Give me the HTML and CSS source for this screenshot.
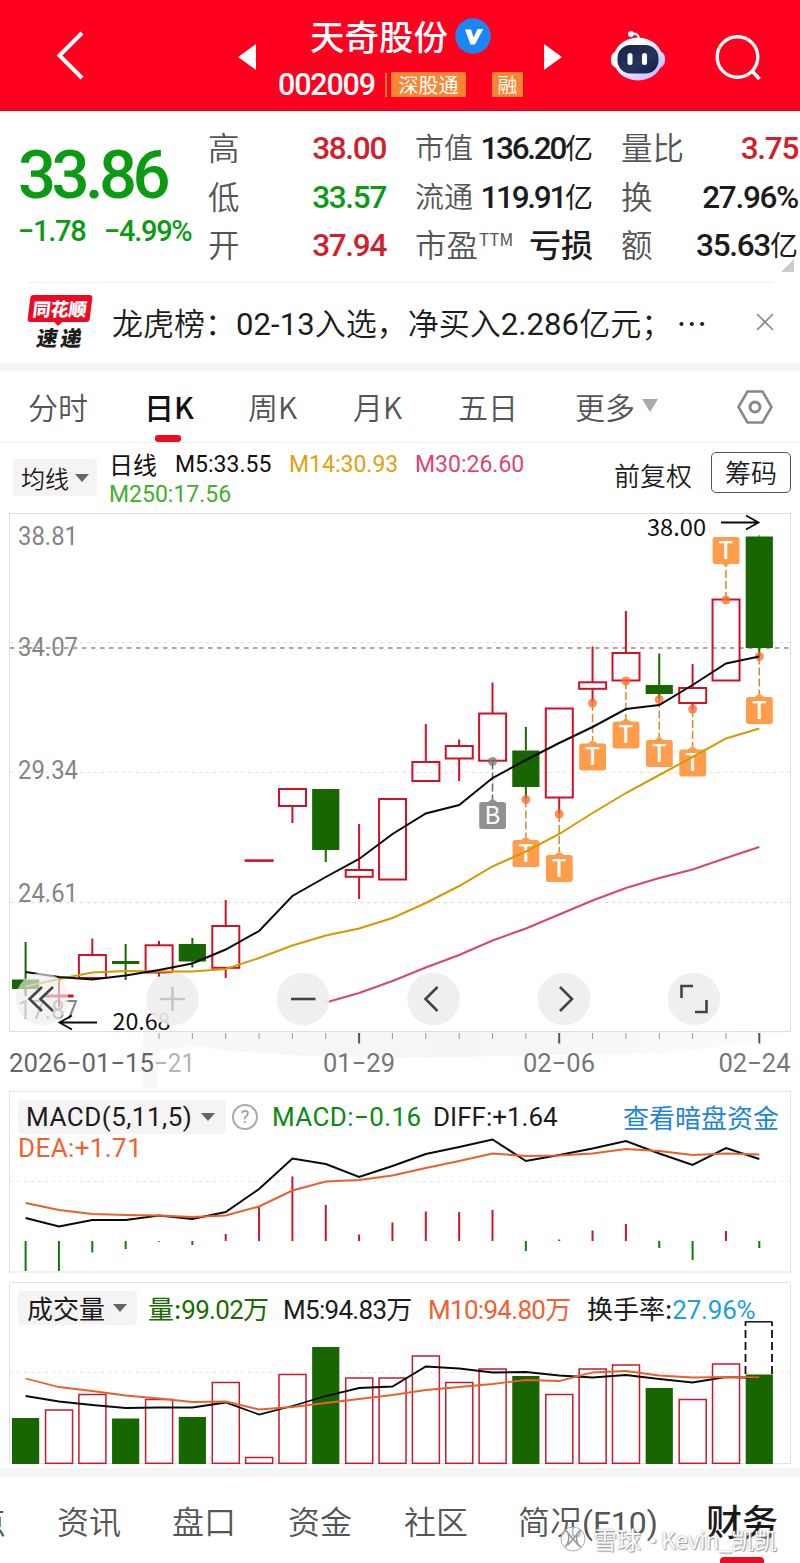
FILE: index.html
```html
<!DOCTYPE html>
<html lang="zh-CN">
<head>
<meta charset="utf-8">
<title>天奇股份 002009</title>
<link rel="stylesheet" href="styles.css">
</head>
<body>
<div class="app">
  <header class="topbar">
    <svg class="back" viewBox="0 0 28 50" width="28" height="50"><path d="M26 2 3.500 24.500 26 47" fill="none" stroke="#fff" stroke-width="4"/></svg>
    <svg class="prev" viewBox="0 0 18 28" width="18" height="28"><path d="M18 1v26L0 14z" fill="#fff"/></svg>
    <div class="heading">
      <div class="name">天奇股份<svg class="verified" viewBox="0 0 36 36" width="36" height="36"><circle cx="18" cy="18" r="17.700" fill="#1b87f5"/><path d="M10 11.500h6l2.600 8 4-8.500h5.600l-8.200 15.500h-4.600z" fill="#fff"/></svg></div>
      <div class="code"><span class="digits">002009</span><i class="bar"></i><span class="tag">深股通</span><span class="tag tag-margin">融</span></div>
    </div>
    <svg class="next" viewBox="0 0 18 28" width="18" height="28"><path d="M0 1v26l18-13z" fill="#fff"/></svg>
    <svg class="robot" viewBox="0 0 56 52" width="56" height="52">
      <defs>
        <linearGradient id="shell" x1="0" y1="0" x2="1" y2="1"><stop offset=".3" stop-color="#fff"/><stop offset="1" stop-color="#b9b4ff"/></linearGradient>
        <linearGradient id="visor" x1="0" y1="0" x2="1" y2="1"><stop offset="0" stop-color="#142048"/><stop offset=".6" stop-color="#26355a"/><stop offset="1" stop-color="#101b4a"/></linearGradient>
      </defs>
      <path d="M21 5c4-1 7 0 8 4" fill="none" stroke="#fff" stroke-width="2"/><circle cx="21" cy="5" r="3" fill="#fff"/>
      <rect x="1" y="22" width="54" height="17" rx="7" fill="url(#shell)"/>
      <ellipse cx="28" cy="30" rx="24.500" ry="21.500" fill="url(#shell)"/>
      <rect x="7.500" y="16" width="41" height="28.500" rx="13" fill="url(#visor)"/>
      <rect x="17.500" y="24" width="5" height="12" rx="2.500" fill="#fff"/><rect x="32" y="24" width="5" height="12" rx="2.500" fill="#fff"/>
    </svg>
    <svg class="search" viewBox="0 0 46 46" width="46" height="46"><circle cx="22.500" cy="22" r="20.300" fill="none" stroke="#fff" stroke-width="3.400"/><path d="m36 35 8.500 9" stroke="#fff" stroke-width="3.600"/></svg>
  </header>

  <section class="quote">
    <div class="last">
      <div class="price">33.86</div>
      <div class="change"><span>−1.78</span><span>−4.99%</span></div>
    </div>
    <dl class="stats">
      <dt>高</dt><dd class="up">38.00</dd><dt class="tight">市值</dt><dd>136.20<b>亿</b></dd><dt>量比</dt><dd class="up">3.75</dd>
      <dt>低</dt><dd class="down">33.57</dd><dt class="tight">流通</dt><dd>119.91<b>亿</b></dd><dt>换</dt><dd>27.96%</dd>
      <dt>开</dt><dd class="up">37.94</dd><dt>市盈<sup>TTM</sup></dt><dd class="words">亏损</dd><dt>额</dt><dd>35.63<b>亿</b></dd>
    </dl>
    <i class="corner"></i>
  </section>

  <section class="news">
    <div class="brand"><div class="brand-top">同花顺</div><div class="brand-sub">速递</div></div>
    <p class="headline"><span>龙虎榜：</span><span class="lat">02-13</span>入选，<span>净买入</span><span class="lat">2.286</span>亿元；<span class="dots">⋯</span></p>
    <svg class="close" viewBox="0 0 18 18" width="18" height="18"><path d="m1 1 16 16M17 1 1 17" stroke="#888" stroke-width="1.600"/></svg>
  </section>

  <nav class="periods">
    <span>分时</span><span class="on">日K</span><span>周K</span><span>月K</span><span>五日</span><span>更多<i class="caret"></i></span>
    <svg viewBox="0 0 36 34" width="36" height="34"><path d="M10.500 1.500h15L34.500 17l-9 15.500h-15L1.500 17z" fill="none" stroke="#888" stroke-width="2.500" stroke-linejoin="round"/><circle cx="18" cy="17" r="5" fill="none" stroke="#888" stroke-width="3"/></svg>
  </nav>

  <section class="averages">
    <div class="picker">均线<i class="caret dark"></i></div>
    <div class="ma-list">
      <span class="cn">日线</span><span>M5:33.55</span><span class="gold">M14:30.93</span><span class="pink">M30:26.60</span>
      <span class="lime">M250:17.56</span>
    </div>
    <div class="adjust">前复权</div>
    <div class="chips">筹码</div>
  </section>

  <svg id="kline" class="chart" viewBox="0 510 800 580" width="800" height="580"></svg>

  <section class="panel macd">
    <svg id="macd" class="chart" viewBox="0 1090 800 186" width="800" height="186"></svg>
    <div class="legend">
      <div class="picker"><span class="lat">MACD(5,11,5)</span><i class="caret dark"></i></div>
      <i class="help">?</i>
      <span class="lat green">MACD:−0.16</span><span class="lat diff">DIFF:+1.64</span><a class="link">查看暗盘资金</a>
      <span class="lat dea">DEA:+1.71</span>
    </div>
  </section>

  <section class="panel volume">
    <svg id="volume" class="chart" viewBox="0 1276 800 192" width="800" height="192"></svg>
    <div class="legend">
      <div class="picker">成交量<i class="caret dark"></i></div>
      <span class="vgreen">量:<span class="num">99.02</span>万</span><span><span class="num">M5:94.83</span>万</span><span class="orange"><span class="num">M10:94.80</span>万</span><span>换手率:<span class="num blue">27.96%</span></span>
    </div>
  </section>

  <footer class="tabs">
    <span class="cut">点</span><span>资讯</span><span>盘口</span><span>资金</span><span>社区</span><span>简况<span class="lat">(F10)</span></span><span class="on">财务</span>
    <div class="watermark"><svg viewBox="0 0 26 26" width="26" height="26"><circle cx="13" cy="13" r="12" fill="#fff" fill-opacity=".65" stroke="#999" stroke-opacity=".8"/><path d="M5 4c5 2 5 12 0 17M21 4c-6 3-6 14 0 17M8 7l10 12M18 7 8 19" fill="none" stroke="#999" stroke-width="1.600"/></svg><span>雪球</span><span class="dot">·</span><span class="user">Kevin_凯凯</span></div>
  </footer>
</div>
<script src="chart.js"></script>
</body>
</html>
```

FILE: styles.css
```css
* { box-sizing: border-box; }
body { margin: 0; background: #fff; color: #1c1c1c; font-family: Roboto, "Noto Sans CJK SC", sans-serif; }
i, b { font-style: normal; font-weight: inherit; }
.app { width: 800px; height: 1563px; overflow: hidden; display: flex; flex-direction: column; }
.app > * { flex: none; }
svg { display: block; }
.lat, .num { font-family: Roboto, sans-serif; }

.topbar { height: 111px; background: #ff001e; color: #fff; display: grid; grid-template-columns: 56px 182px 40px 266px 67px 104px 1fr; border-bottom: 1px solid #e00020; }
.back { grid-column: 2; margin-top: 31px; }
.prev { grid-column: 3; margin-top: 43px; }
.heading { grid-column: 4; }
.next { grid-column: 5; margin-top: 43px; }
.robot { grid-column: 6; margin-top: 29px; margin-left: -1px; }
.search { grid-column: 7; margin-top: 35px; }
.name { display: flex; margin-left: 32px; padding-top: 15px; height: 66px; font: 500 34.500px/40px "Noto Sans CJK SC"; }
.verified { margin: 3px 0 0 7px; }
.code { display: flex; align-items: flex-start; }
.digits { width: 107px; font-weight: 500; font-size: 30.500px; line-height: 38px; letter-spacing: -1.200px; }
.bar { width: 2px; height: 24px; margin-top: 7px; margin-right: 4px; background: #fb7a2c; }
.tag { height: 25px; width: 75px; margin-top: 6px; background: #f98431; border-radius: 1px; font: 20px/25px "Noto Sans CJK SC"; text-align: center; }
.tag-margin { width: 31px; margin-left: 26px; }

.quote { height: 171px; display: grid; grid-template-columns: 208px 592px; position: relative; }
.price { padding-left: 18px; padding-top: 26px; font-size: 67px; font-weight: 500; line-height: 76px; letter-spacing: -4.600px; color: #0b9b12; }
.change { display: grid; grid-template-columns: 86px 100px; padding-left: 18px; font-size: 29px; font-weight: 500; line-height: 37px; letter-spacing: -1.300px; color: #0b9b12; }
.stats { margin: 13px 0 0; display: grid; grid-template-columns: 50px 128px 29px 90px 88px 28px 60px 118px; grid-template-rows: repeat(3, 48.500px); font-size: 31.500px; line-height: 48px; }
.stats dt { font-family: "Noto Sans CJK SC"; font-weight: 350; line-height: 44px; color: #555; white-space: nowrap; }
.stats dd { margin: 0; padding-top: 1px; font-weight: 500; letter-spacing: -1.300px; text-align: right; white-space: nowrap; }
.stats dt:nth-of-type(3n+1) { grid-column: 1; }
.stats dd:nth-of-type(3n+1) { grid-column: 2; }
.stats dt:nth-of-type(3n+2) { grid-column: 4; }
.stats dd:nth-of-type(3n+2) { grid-column: 5; justify-self: end; letter-spacing: -2.300px; }
.stats dt:nth-of-type(3n) { grid-column: 7; }
.stats dd:nth-of-type(3n) { grid-column: 8; margin-right: 1px; }
.stats .tight { font-size: 29px; line-height: 45px; }
.stats b { font-family: "Noto Sans CJK SC"; font-size: 28px; line-height: 0; font-weight: 400; letter-spacing: 0; }
.stats dd.words:nth-of-type(3n+2) { padding: 0; font: 500 32px/44px "Noto Sans CJK SC"; letter-spacing: 0; }
.stats sup { font: 17px/17px "Noto Sans CJK SC"; line-height: 0; vertical-align: 11px; margin-left: 1px; }
.up { color: #d1202c; }
.down { color: #0b9b12; }
.corner { position: absolute; right: 6px; bottom: 10px; border-left: 13px solid transparent; border-bottom: 13px solid #ccc; }

.news { height: 89px; display: grid; grid-template-columns: 84px 643px 1fr; padding-left: 28px; border-bottom: 8px solid #f5f5f5; background: linear-gradient(#eee, #eee) 28px 0 / 745px 1px no-repeat; }
.brand { width: 66px; padding-top: 13px; font-family: "Noto Sans CJK SC"; font-weight: 900; text-align: center; }
.brand-top { height: 27px; width: 62px; margin-left: 1px; transform: skewX(-7deg); border-radius: 3px; background: #ee0a22; color: #fff; font-size: 18px; line-height: 26px; }
.brand-top::after { content: ""; display: block; width: 0; margin: 0 auto; border: 5px solid transparent; border-top-color: #ee0a22; border-bottom: 0; }
.brand-sub { font-size: 21px; line-height: 29px; transform: skewX(-10deg); letter-spacing: 3px; margin-top: 1px; }
.headline { margin: 0; padding-top: 18px; font: 350 31px/44px "Noto Sans CJK SC"; white-space: nowrap; }
.headline .lat { font: 400 31px/44px Roboto; letter-spacing: .1px; }
.headline .dots { font-size: 31px; margin-left: 4px; }
.close { margin: 31px 0 0 1px; }

.periods { height: 72px; padding-left: 28px; display: grid; grid-template-columns: 116px 104px 105px 105px 117px 162px 1fr; font: 350 30px/72px "Noto Sans CJK SC"; color: #555; border-bottom: 1px solid #eee; }
.periods span { display: flex; align-items: center; height: 69px; }
.periods .on { position: relative; color: #111; font-weight: 500; }
.periods .on::after { content: ""; position: absolute; left: 11px; top: 64px; width: 26px; height: 7px; border-radius: 3px; background: #ed0a22; }
.periods svg { margin-top: 19px; }
.caret { display: inline-block; border: 8px solid transparent; border-top: 13px solid #aaa; border-bottom: 0; margin-left: 7px; }
.caret.dark { border-width: 8px 7px 0; border-top-color: #666; margin-left: 8px; }

.averages { height: 67px; display: grid; grid-template-columns: 13px 84px 12px 505px 97px 80px; font: 350 26px/30px "Noto Sans CJK SC"; }
.picker { display: flex; align-items: center; background: #f6f3f4; border-radius: 4px; }
.averages .picker { grid-column: 2; height: 37px; margin-top: 16px; padding-left: 8px; font-size: 24px; }
.averages .picker .caret { margin-left: 6px; }
.ma-list { grid-column: 4; display: grid; grid-template-columns: 66px 114px 126px 1fr; grid-template-rows: 30px 30px; margin-top: 7px; font: 400 23px/30px Roboto; color: #111; }
.ma-list .cn { font: 400 24px/28px "Noto Sans CJK SC"; }
.ma-list .gold { color: #e2a10c; }
.ma-list .pink { color: #e0446e; }
.ma-list .lime { color: #41b02c; grid-column: 1 / 4; }
.adjust { grid-column: 5; padding-top: 17px; }
.chips { height: 41px; margin-top: 9px; border: 1.500px solid #555; border-radius: 5px; text-align: center; line-height: 38px; }

.chart { font-family: Roboto, sans-serif; }
.chart .cjk { font-family: "Noto Sans CJK SC", sans-serif; }
.panel { display: grid; }
.panel > * { grid-area: 1 / 1; }
.macd .legend { display: grid; grid-template-columns: 208px 6px 40px 161px 191px 160px; grid-template-rows: 34px 26px; align-content: start; padding: 10px 0 0 18px; font-size: 26px; line-height: 35px; white-space: nowrap; }
.macd .picker { padding-left: 8px; }
.macd .picker .lat { width: 167px; letter-spacing: .500px; }
.help { grid-column: 3; width: 26px; height: 26px; margin-top: 4px; border: 2px solid #aaa; border-radius: 50%; color: #999; font: 18px/22px Roboto; text-align: center; }
.green { color: #078c10; letter-spacing: .400px; }
.link { font: 26px/33px "Noto Sans CJK SC"; margin-left: -1px; color: #1f85d8; }
.dea { grid-column: 1; color: #ee6230; line-height: 29px; letter-spacing: .400px; }

.volume .legend { display: grid; grid-template-columns: 130px 135px 145px 159px 1fr; align-content: start; padding: 15px 0 0 18px; font: 26px/34px "Noto Sans CJK SC"; white-space: nowrap; }
.volume .picker { width: 119px; height: 34px; padding-left: 9px; }
.volume .num { font-size: 26px; letter-spacing: -.700px; }
.volume .blue { letter-spacing: -.200px; }
.vgreen { color: #1a6b00; }
.orange { color: #ee6230; }
.blue { color: #1ca0dc; }

.tabs { position: relative; height: 95px; border-top: 9px solid #f5f5f5; display: grid; grid-template-columns: 57px 115px 116px 116px 114px 188px 94px; font: 350 32px/87px "Noto Sans CJK SC"; color: #555; white-space: nowrap; }
.tabs .cut { margin-left: -26px; }
.tabs .lat { font: 400 32px/87px Roboto; }
.tabs .on { position: relative; color: #1a1a1a; font-weight: 500; font-size: 36px; }
.tabs .on::after { content: ""; position: absolute; left: 14px; top: 80px; width: 44px; height: 8px; border-radius: 4px 4px 0 0; background: #ed0a22; }
.watermark { position: absolute; left: 560px; top: 49px; display: flex; font: 24px/26px "Noto Sans CJK SC"; color: #fff; text-shadow: 1px 1px 1px #999, 0 0 2px #999; }
.watermark svg { margin-right: 7px; }
.watermark .dot { width: 20px; text-align: center; }
.watermark .user { font-size: 23px; letter-spacing: -.400px; }
```

FILE: chart.js
```js
const RED = '#d11128', GREEN = '#176600', BLACK = '#0a0a0a';
const X0 = 25.6, STEP = 33.35, N = 23;
const cx = i => X0 + STEP * i;

const line = (x1, y1, x2, y2, c, w = 1, extra = '') =>
  `<line x1="${x1}" y1="${y1}" x2="${x2}" y2="${y2}" stroke="${c}" stroke-width="${w}" ${extra}/>`;
const text = (s, x, y, len, c, size, extra = '') =>
  `<text x="${x}" y="${y}" textLength="${len}" lengthAdjust="spacingAndGlyphs" fill="${c}" font-size="${size}" ${extra}>${s}</text>`;
const poly = (ys, c, w = 2, start = 0) =>
  `<polyline points="${ys.map((y, k) => (cx(k + start)).toFixed(1) + ',' + y).join(' ')}" fill="none" stroke="${c}" stroke-width="${w}"/>`;
const dash = (y, c = '#e3e3e3', w = 1, pat = '3 4') => line(10, y, 790, y, c, w, `stroke-dasharray="${pat}"`);

// [direction, bodyTop, bodyBottom, high, low]
const candles = [
  ['g', 979.5, 989, 942, 996], ['r', 995.5, 996.5, 980, 1007], ['r', 955, 978, 938.5, 978],
  ['g', 961, 964, 944, 980], ['r', 945.3, 972.5, 941, 977], ['g', 944, 961.5, 938, 967.5],
  ['r', 926, 967.8, 900, 978], ['r', 860.3, 860.9, 860.3, 860.9], ['r', 789, 806, 789, 823],
  ['g', 789, 850, 789, 862], ['r', 870, 876.8, 824, 899], ['r', 799, 879.5, 799, 879.5],
  ['r', 762, 781, 724, 781], ['r', 746, 758.5, 739.5, 781], ['r', 713.5, 760.7, 682.5, 761],
  ['g', 750.5, 787, 727, 799], ['r', 708.5, 797.5, 708, 814], ['r', 682.3, 688.8, 646.5, 702],
  ['r', 653, 680.5, 611, 681], ['g', 685, 694, 653.5, 699], ['r', 688, 703, 664, 709],
  ['r', 599.5, 680.5, 599, 680], ['g', 536.5, 648, 535.5, 656]
];
const marks = [[14, 761.5, 802, 'B'], [15, 799.5, 840, 'T'], [16, 814, 855, 'T'], [17, 703, 743.5, 'T'],
  [18, 681, 721.5, 'T'], [19, 699.5, 740, 'T'], [20, 709, 749.5, 'T'], [21, 600, 537, 'T'], [22, 656.5, 697, 'T']];

function drawKline() {
  let s = '<defs><linearGradient id="smudge" x1="0" x2="1"><stop offset="0" stop-color="#f9f8f8"/><stop offset=".5" stop-color="#f5f5f5"/><stop offset="1" stop-color="#fdfbfb"/></linearGradient></defs>';
  s += '<path d="M143 1032H786Q740 1048 660 1053L400 1058Q240 1056 200 1046L158 1050V1088H143z" fill="url(#smudge)"/>';
  s += '<rect x="9.500" y="513.500" width="781" height="518" fill="none" stroke="#dedede"/>';
  s += dash(642.5) + dash(772.5) + dash(902.5, '#d8d8d8');
  [['38.81', 545], ['34.07', 656], ['29.34', 778.5], ['24.61', 902], ['17.87', 1019]].forEach(([t, y]) => { s += text(t, 18, y, 60, '#858585', 25.5); });
  s += dash(648, '#a08a68', 1.4, '4.5 4.5');

  candles.forEach(([d, t, b, h, l], i) => {
    const x = cx(i), c = d === 'r' ? RED : GREEN;
    if (h < t) s += line(x, h, x, t, c, 2);
    if (l > b) s += line(x, b, x, l, c, 2);
    s += d === 'r'
      ? `<rect x="${x - 13.4}" y="${t}" width="27" height="${b - t}" fill="none" stroke="${c}" stroke-width="2"/>`
      : `<rect x="${x - 13.6}" y="${t}" width="27.200" height="${b - t}" fill="${c}"/>`;
  });

  marks.forEach(([i, dot, top, t]) => {
    const x = cx(i), c = t === 'B' ? '#919191' : '#ff9d4d', stem = t === 'B' ? '#666' : '#d58a30';
    const above = top < dot;
    s += line(x, dot, x, above ? top + 29 : top - 3, stem, 1.5, 'stroke-dasharray="8 3"');
    s += `<circle cx="${x}" cy="${dot}" r="4.500" fill="${t === 'B' ? '#777' : '#ff6a2a'}" fill-opacity=".75"/>`;
    s += above ? `<path d="M${x - 5} ${top + 26}h10l-5 4z" fill="${c}"/>` : `<path d="M${x - 6} ${top + 1}h12l-6-4.500z" fill="${c}"/>`;
    s += `<rect x="${x - 13.3}" y="${top}" width="26.800" height="27" rx="2.500" fill="${c}"/>`;
    s += `<text x="${x}" y="${top + 21.8}" text-anchor="middle" fill="#fff" font-size="24" font-weight="${t === 'B' ? 400 : 500}" class="cjk">${t}</text>`;
  });

  s += poly([986.5, 979, 972.5, 971, 971.5, 971.5, 969, 958, 945.5, 935.5, 928.5, 918, 903, 886, 866.5, 851.5, 834, 813, 793, 775, 757, 738.5, 728.5], '#d69a00');
  s += poly([972, 977, 979.5, 975.5, 970, 963.5, 949.5, 931, 896, 877, 859, 834, 813.5, 805, 778, 760, 743, 727, 709, 705, 685, 663.5, 656.5], BLACK);
  s += poly([1002.5, 993, 981, 967.5, 955, 940.5, 928.5, 914.5, 900.5, 888, 878, 869.5, 858, 847], '#d94668', 2, 9);

  s += text('38.00', 647, 536, 59, '#111', 23.5, 'class="cjk"') + `<path d="M721 522.500H758M746 515.500 758.500 522.500 746 529.500" fill="none" stroke="${BLACK}" stroke-width="1.800"/>`;
  s += text('20.68', 112.5, 1030, 58, '#111', 22.5, 'class="cjk"') + `<path d="M97 1022.500H60M72 1015.500 59.500 1022.500 72 1029.500" fill="none" stroke="${BLACK}" stroke-width="1.800"/>`;

  [42, 172.5, 303, 433.5, 564, 694].forEach((x, k) => {
    const shape = [
      'M0-12-12.500 0 0 12M11-12-1.500 0 11 12', 'M-12.500 0H12.500M0-12V12', 'M-12 0H12.500',
      'M4-12-8 0 4 12', 'M-4-12 8 0-4 12', 'M-12.500-1V-13H-1M12.500 1V13H1'
    ][k];
    s += `<g transform="translate(${x} 999)"><circle r="26.300" fill="#ededed" fill-opacity="${k === 0 ? .66 : .9}"/><path d="${shape}" fill="none" stroke="${k === 1 ? '#c6c6c6' : '#444'}" stroke-width="2.600"/></g>`;
  });

  for (let i = 4; i < N; i++) {
    const major = i === 10 || i === 16 || i === 22;
    s += line(cx(i), 1033, cx(i), major ? 1043.5 : 1039, major ? '#555' : '#999', major ? 2 : 1);
  }
  s += text('2026−01−15', 9, 1072, 145, '#666', 26) + text('−21', 154, 1072, 41, '#b5b5b5', 26);
  s += text('01−29', 323, 1072, 72, '#777', 26) + text('02−06', 523, 1072, 72, '#777', 26) + text('02−24', 718.5, 1072, 72, '#777', 26);
  document.getElementById('kline').innerHTML = s;
}

function drawMacd() {
  const ends = [1271, 1271, 1252.5, 1249, 1241.8, 1245, 1234, 1207, 1176.5, 1205, 1234.5, 1222.5, 1211.5, 1212, 1210, 1251, 1239.5, 1230.5, 1224, 1248, 1260, 1231, 1248];
  let s = '<rect x="9.500" y="1091.500" width="781" height="180.500" fill="none" stroke="#e2e2e2"/>' + dash(1181.5, '#e6e6e6');
  ends.forEach((y, i) => { s += line(cx(i), 1241, cx(i), y, y > 1241 ? '#0b7a10' : '#c61828', 2); });
  s += poly([1218, 1226.5, 1220, 1220, 1215.5, 1219, 1212, 1189, 1158.5, 1164, 1177, 1166, 1154, 1147, 1139.5, 1161, 1155, 1148.5, 1141, 1153.5, 1165, 1148, 1159], BLACK);
  s += poly([1203, 1210, 1214, 1215, 1215.5, 1217, 1215.5, 1206.5, 1190.5, 1181.5, 1180, 1175.5, 1168, 1161, 1153.5, 1156, 1155.5, 1153.5, 1149, 1151, 1155, 1153.5, 1154.5], '#e9602f');
  document.getElementById('macd').innerHTML = s;
}

function drawVolume() {
  const tops = [1418, 1410, 1394.5, 1418.5, 1399.5, 1417, 1382.5, 1457.5, 1374.5, 1347, 1378, 1378, 1356, 1382.5, 1369, 1376, 1394.5, 1369, 1365, 1388, 1399.5, 1364, 1374.5];
  let s = '<path d="M9.500 1463.500V1282.500H790.500V1463.500H9.500" fill="none" stroke="#e2e2e2"/>' + dash(1372.5, '#e6e6e6');
  tops.forEach((y, i) => {
    const x = cx(i);
    s += [0, 3, 5, 9, 15, 19, 22].includes(i)
      ? `<rect x="${x - 13.6}" y="${y}" width="27.200" height="${1464 - y}" fill="${GREEN}"/>`
      : `<rect x="${x - 13.4}" y="${y}" width="27" height="${1463.3 - y}" fill="none" stroke="#c61a2e" stroke-width="1.500"/>`;
  });
  s += '<path d="M745.500 1374V1321.500M772 1374V1321.500" stroke="#111" stroke-width="1.800" stroke-dasharray="8 4"/><path d="M745 1321.800H772" stroke="#111" stroke-width="1.500"/>';
  s += poly([1396, 1401.5, 1405, 1408, 1407.5, 1407.5, 1402.5, 1414.5, 1406, 1396, 1388, 1386.5, 1366.5, 1368.5, 1372.5, 1372, 1375.5, 1377.5, 1375, 1379, 1382.5, 1377, 1378], BLACK, 1.8);
  s += poly([1378.5, 1387, 1391, 1395.5, 1398.5, 1402, 1401.5, 1409.5, 1407, 1403, 1399, 1395, 1390, 1387, 1384, 1380, 1381, 1372.5, 1371, 1375.5, 1377.5, 1377, 1377.5], '#e9602f', 1.8);
  document.getElementById('volume').innerHTML = s;
}

drawKline();
drawMacd();
drawVolume();
```
